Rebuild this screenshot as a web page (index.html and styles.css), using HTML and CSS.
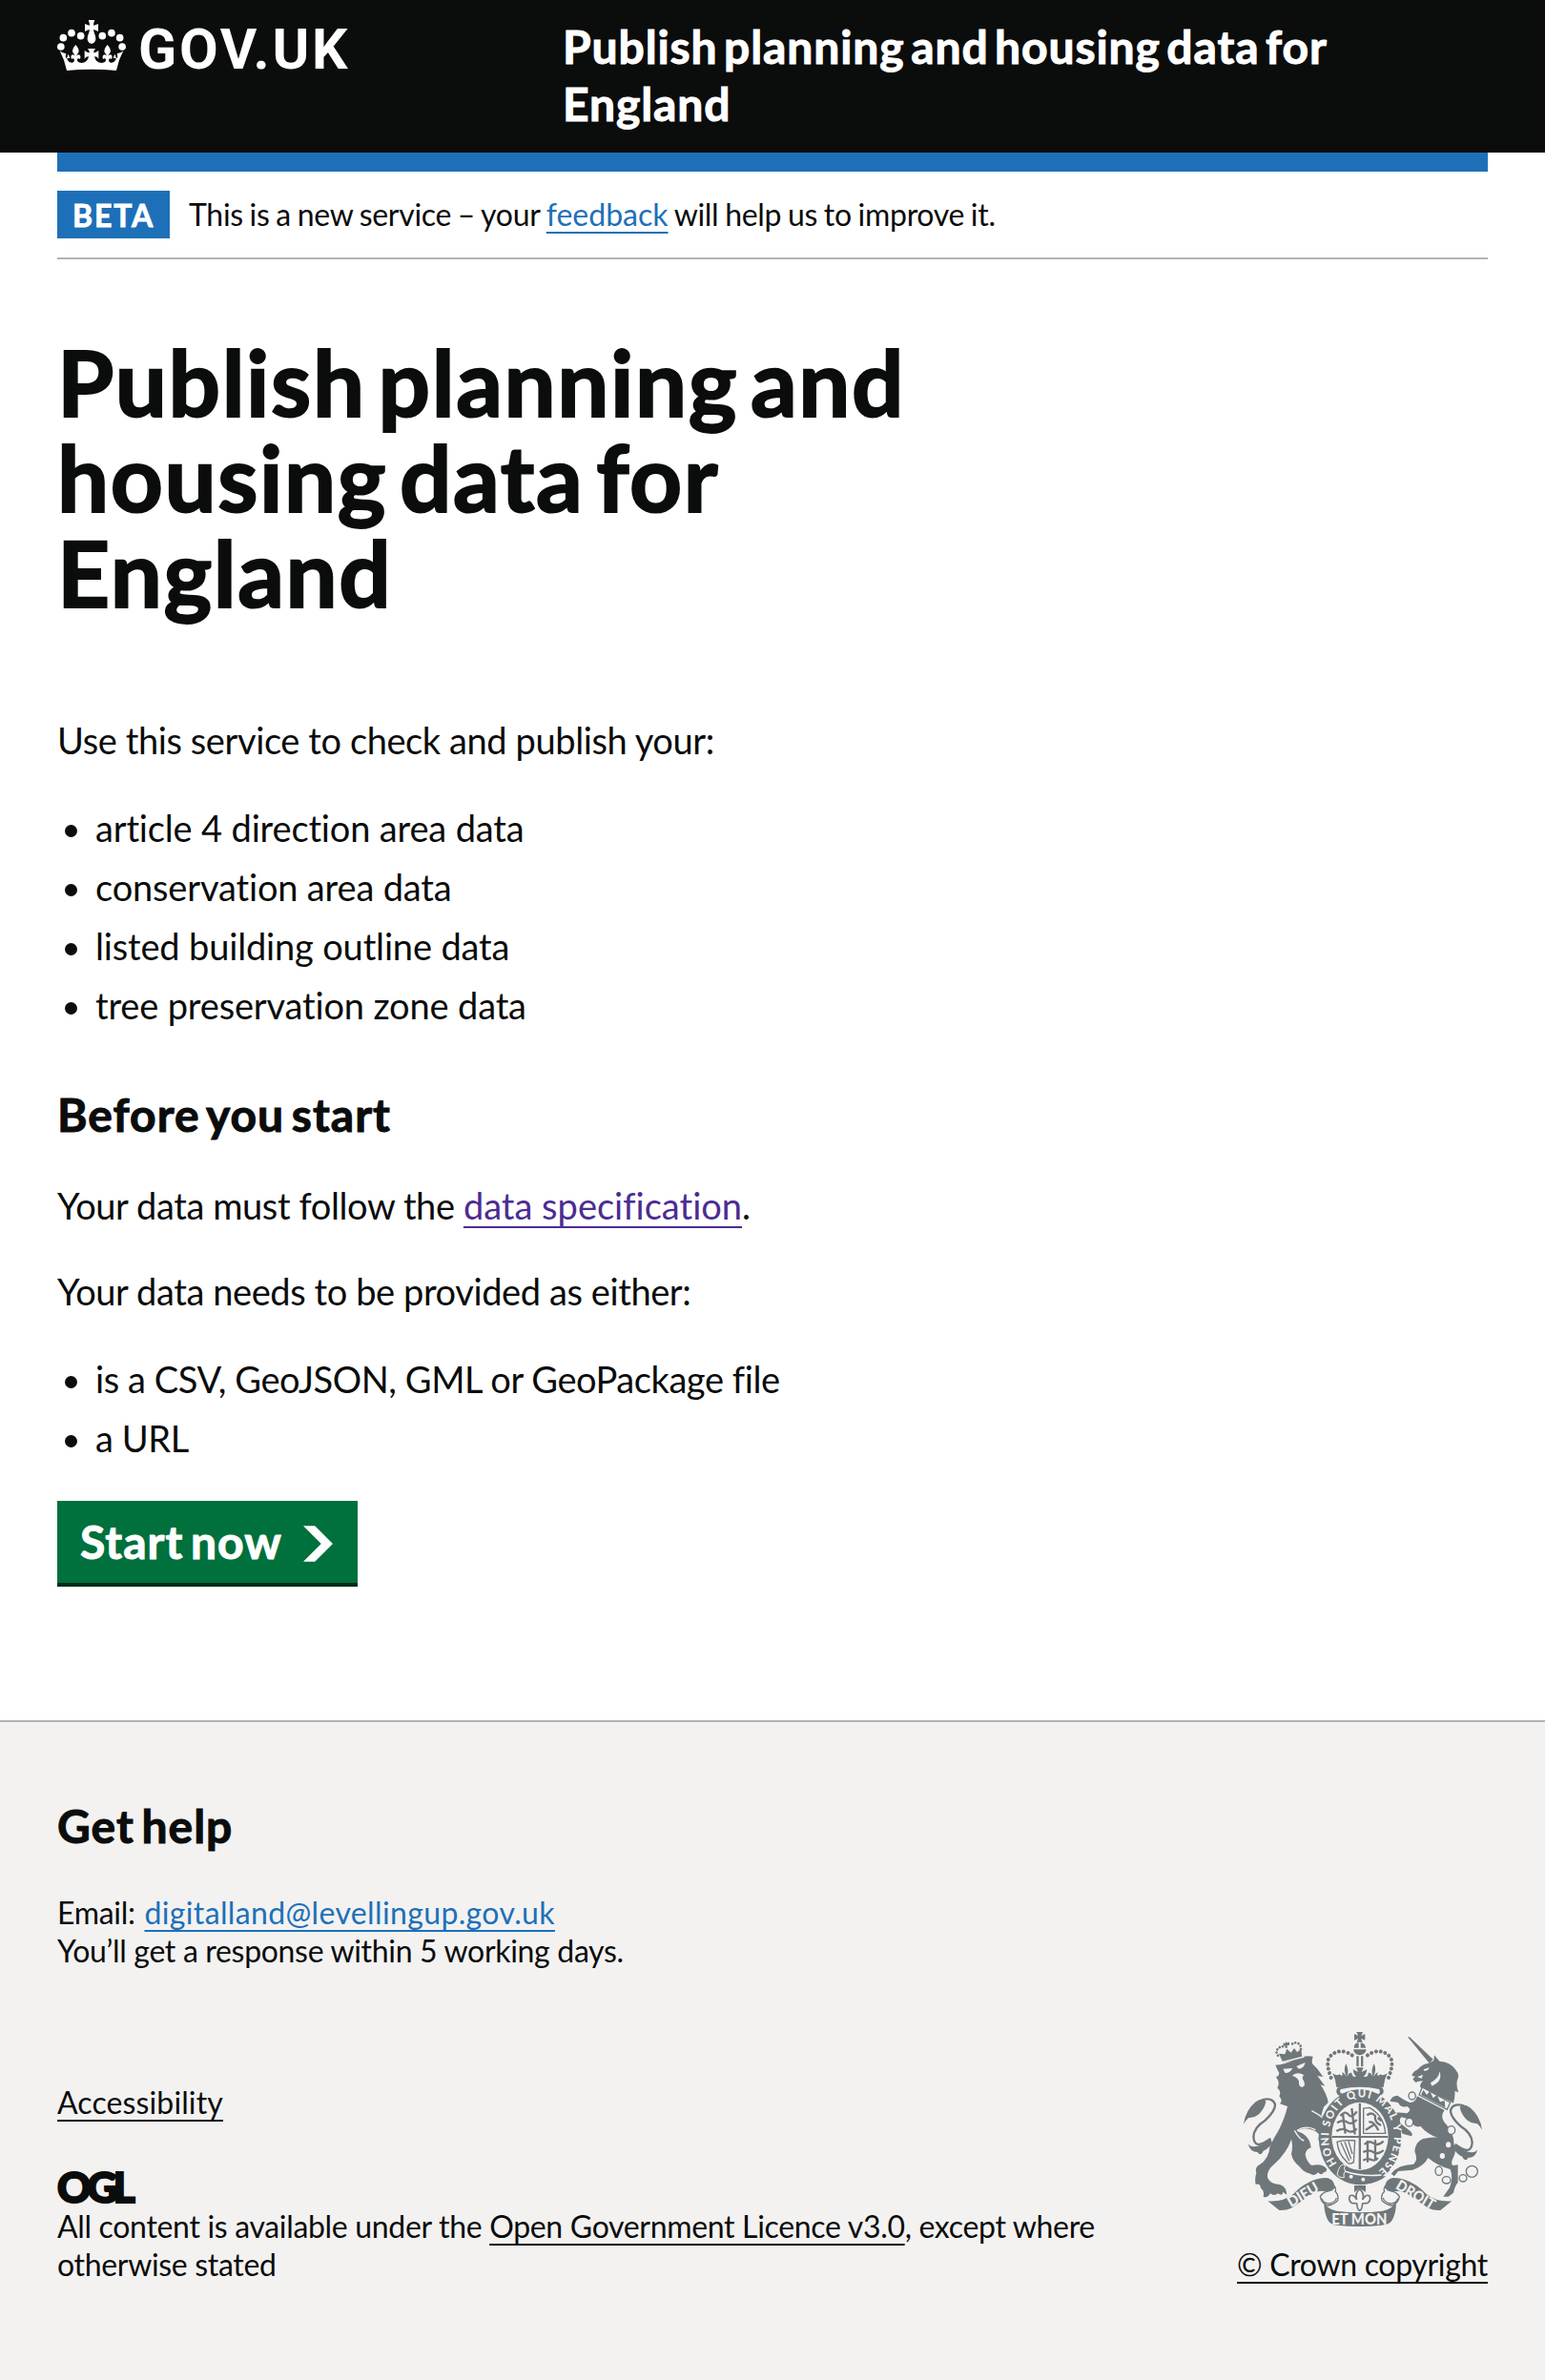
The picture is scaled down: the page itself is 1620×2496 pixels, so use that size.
FILE: index.html
```
<!DOCTYPE html>
<html lang="en">
<head>
<meta charset="utf-8">
<title>Publish planning and housing data for England</title>
<link rel="stylesheet" href="styles.css">
</head>
<body>
<header class="header">
  <div class="container header-row">
    <a class="logo" href="#" aria-label="GOV.UK">
      <svg class="crown" viewBox="12 15 216 160" fill="#fff" aria-hidden="true">
        <g id="pearls">
          <circle cx="23.500" cy="99" r="11.500"/><circle cx="31" cy="71" r="11.500"/><circle cx="57" cy="56" r="11.500"/><circle cx="86" cy="65" r="11.500"/>
        </g>
        <use href="#pearls" transform="matrix(-1 0 0 1 240 0)"/>
        <path d="M110 15H130Q126 24 126 32Q134 31 141 27V51Q134 46 126 45Q127 54 132 65Q137 86 120 90Q103 86 108 65Q113 54 114 45Q106 46 99 51V27Q106 31 114 32Q114 24 110 15Z"/>
        <path d="M20 112Q28 121 40 120Q36 130 40 136Q45 132 46 122Q50 127 52 136Q43 132 43 138Q48 150 60 149Q68 146 65 138Q62 133 57 138Q52 126 61 124Q66 124 68 129Q66 121 61 117Q57 107 70 93Q83 107 79 117Q74 121 72 129Q74 124 79 124Q88 126 84 138Q78 133 75 138Q73 149 88 150Q107 150 111 130Q103 129 98 137V111Q106 118 114 118Q113 111 108 105H132Q127 111 126 118Q134 118 142 111V137Q137 129 129 130Q133 150 152 150Q167 149 165 138Q162 133 156 138Q152 126 161 124Q166 124 168 129Q166 121 161 117Q157 107 170 93Q183 107 179 117Q174 121 172 129Q174 124 179 124Q188 126 183 138Q178 133 175 138Q172 146 180 149Q192 150 197 138Q197 132 188 136Q190 127 194 122Q195 132 200 136Q204 130 200 120Q212 121 220 112Q205 140 198 174Q120 167 42 174Q35 140 20 112Z"/>
      </svg>
      <span class="wordmark">GOV.UK</span>
    </a>
    <a class="service-name" href="#">Publish planning and housing data for England</a>
  </div>
</header>

<div class="container">
  <div class="phase-banner">
    <strong class="tag">BETA</strong>
    <span class="phase-text">This is a new service – your <a class="link feedback" href="#">feedback</a> will help us to improve it.</span>
  </div>

  <main class="main">
    <h1 class="title">Publish planning and housing data for England</h1>
    <p class="body">Use this service to check and publish your:</p>
    <ul class="list">
      <li>article 4 direction area data</li>
      <li>conservation area data</li>
      <li>listed building outline data</li>
      <li>tree preservation zone data</li>
    </ul>
    <h2 class="heading">Before you start</h2>
    <p class="body">Your data must follow the <a class="link link-visited" href="#">data specification</a>.</p>
    <p class="body">Your data needs to be provided as either:</p>
    <ul class="list list-formats">
      <li>is a CSV, GeoJSON, GML or GeoPackage file</li>
      <li>a URL</li>
    </ul>
    <a class="button" href="#">Start now
      <svg class="chevron" viewBox="0 0 33 40" aria-hidden="true"><path fill="#fff" d="M0 0h13l20 20-20 20H0l20-20z"/></svg>
    </a>
  </main>
</div>

<footer class="footer">
  <div class="container">
    <h2 class="heading">Get help</h2>
    <p class="contact">Email: <a class="link email" href="#">digitalland@levellingup.gov.uk</a><br>You’ll get a response within 5 working days.</p>
    <div class="meta">
      <div class="meta-main">
        <a class="link link-dark accessibility" href="#">Accessibility</a>
        <div class="ogl">OGL</div>
        <p class="licence">All content is available under the <a class="link link-dark" href="#">Open Government Licence v3.0</a>, except where otherwise stated</p>
      </div>
      <div class="meta-side">
        <svg class="crest" viewBox="72 66 750 612" aria-hidden="true">
          <defs>
            <path id="motto" d="M366 480A103 125 0 1 1 500 500"/>
            <g id="tail">
              <path d="M156 402Q106 440 103 396Q104 366 140 344Q172 314 171 294Q162 270 130 280" fill="none" stroke="#6f777b" stroke-width="7"/>
              <path d="M72 356Q78 312 110 286Q132 270 142 285Q138 308 118 326Q102 338 88 336Q78 344 72 356ZM86 418Q96 432 120 424Q144 416 156 398L162 416Q146 436 134 440Q130 452 120 450L116 444Q92 444 86 418Z"/>
            </g>
            <g id="scroll">
              <path d="M148 598Q196 602 228 576Q276 526 332 525Q358 530 357 552L342 572Q312 560 290 574Q252 600 222 620Q204 629 184 627Z"/>
              <path d="M357 550Q364 560 360 568Q372 578 368 596Q354 610 336 612Q316 604 313 584Q320 570 342 566Q356 562 357 550Z" fill="#f3f2f1" stroke="#6f777b" stroke-width="4"/>
              <path d="M318 590Q322 606 342 606Q362 600 364 588" fill="none" stroke="#6f777b" stroke-width="4"/>
            </g>
          </defs>
          <g fill="#6f777b">
            <!-- central crown -->
            <path d="M427 66H447L442 78L454 72V92L442 87L446 98H428L432 87L420 92V72L432 78Z"/>
            <path d="M419 116Q420 100 434 100V116ZM440 100Q455 102 456 116H440ZM417 121H458Q455 138 437 139Q420 138 417 121Z"/>
            <path d="M427 142H434V174H427ZM441 142H448V174H441Z"/>
            <path d="M347 210Q328 160 344 143Q366 120 396 130Q412 136 420 146M528 210Q547 160 531 143Q509 120 479 130Q463 136 455 146" fill="none" stroke="#6f777b" stroke-width="12" stroke-linecap="round" stroke-dasharray="0.1 14.500"/>
            <path d="M352 196Q366 206 374 199Q386 212 382 192Q392 198 396 206Q384 184 394 166Q404 184 398 206Q404 192 412 195Q414 210 426 206Q418 202 416 184L432 192L426 178H449L443 192L460 184Q458 202 449 206Q464 210 464 195Q472 192 478 206Q472 184 482 166Q492 184 480 206Q486 198 494 192Q490 212 502 199Q510 206 524 196Q514 216 512 240Q437 230 364 240Q362 216 352 196Z"/>
            <path d="M364 256Q362 240 378 237Q437 228 498 237Q514 240 512 256Q506 270 494 268Q437 238 384 266Q368 270 364 256Z"/>
            <path d="M378 246Q437 232 498 246Q504 256 496 262Q437 236 382 260Q370 256 378 246Z" fill="#f3f2f1"/>

            <!-- lion -->
            <path d="M183 134L196 163L256 149L253 118L241 130L231 117L221 131L208 119L202 136Z"/>
            <path d="M180 140Q172 128 178 121Q186 110 200 112M252 120Q254 108 244 102Q232 96 222 106" fill="none" stroke="#6f777b" stroke-width="8" stroke-linecap="round" stroke-dasharray="0.1 10"/>
            <path d="M206 94L210 116H202ZM196 102L216 98V107L198 110Z"/>
            <path d="M172 170Q200 170 238 150Q264 138 290 143Q286 156 288 166Q306 182 322 207L304 204L328 236L314 232Q334 262 338 288L324 302L316 328Q344 348 346 376L350 414Q334 410 338 424Q322 424 312 412Q302 402 312 394Q304 376 280 372Q258 366 240 378Q280 390 284 430Q268 434 266 452Q270 474 286 486Q322 478 334 498Q330 512 324 506Q318 520 306 508Q296 522 282 512Q262 510 248 490Q226 472 222 450Q228 424 222 404Q208 446 168 482Q142 504 148 526Q156 544 186 546Q206 552 208 578L196 570Q194 584 180 574Q168 584 156 574Q146 590 134 584Q138 566 126 558Q124 540 110 546Q106 526 112 510Q106 492 122 484Q152 464 154 428Q164 404 182 376Q202 336 210 300L186 292Q196 282 184 268Q192 252 178 242Q188 226 174 208Q190 200 180 188Z"/>
            <path d="M196 182L226 180Q216 198 202 194ZM238 174L266 162Q262 180 246 182ZM224 204Q240 188 262 202Q252 208 262 222Q268 236 256 240Q244 238 246 222Q242 208 224 204Z" fill="#f3f2f1"/>
            <path d="M286 314Q330 336 340 362M240 376Q268 358 298 374M232 376Q248 404 262 408M190 162L262 144" fill="none" stroke="#f3f2f1" stroke-width="4"/>
            <use href="#tail"/>

            <!-- unicorn -->
            <path d="M588 82L594 82L668 152L656 164Z"/>
            <path d="M654 164L670 156L672 139L688 158Q722 160 738 184Q752 200 746 212Q738 230 748 256L736 252Q738 268 732 290L722 284L630 242Q622 234 636 220L618 222Q614 230 604 214L612 206L601 204Q604 190 620 184Q634 166 654 164Z"/>
            <path d="M638 184L656 178Q652 190 640 188ZM660 226Q688 210 688 190Q700 222 664 236ZM618 208L636 200L632 212Z" fill="#f3f2f1"/>
            <path d="M634 240L722 288L712 310L624 264Z" fill="#f3f2f1" stroke="#6f777b" stroke-width="4"/>
            <path d="M630 264L638 248L648 264L658 252L668 274L680 264L690 286L704 282L706 304Z"/>
            <path d="M618 268L704 312Q686 334 712 360Q734 386 734 420Q742 440 732 460Q722 480 730 486L746 484V540Q736 550 732 572L716 584H700L720 556Q732 524 722 498Q680 486 652 462Q640 488 604 500L558 504L546 520L536 512Q556 484 606 482Q622 470 610 442Q612 412 636 402Q662 396 682 398Q650 388 628 362Q606 370 598 342L568 334Q560 342 566 354L596 378Q606 386 600 394L572 386Q558 360 544 350L530 326Q548 316 586 322Q604 310 586 300Q566 306 558 288L532 284Q538 266 556 266Q576 280 594 288Q612 290 618 268Z"/>
            <use href="#tail" transform="matrix(-1 0 0 1 894 18)"/>
            <g fill="#f3f2f1" stroke="#6f777b" stroke-width="4">
              <ellipse cx="602" cy="267" rx="11" ry="12"/><ellipse cx="593" cy="350" rx="12" ry="13"/>
              <ellipse cx="725" cy="375" rx="12" ry="13"/><ellipse cx="716" cy="421" rx="10" ry="11"/>
              <ellipse cx="697" cy="456" rx="10" ry="11"/><ellipse cx="686" cy="503" rx="11" ry="14"/>
              <ellipse cx="710" cy="532" rx="13" ry="11"/><ellipse cx="762" cy="526" rx="12" ry="11"/>
              <circle cx="790" cy="505" r="18"/>
            </g>

            <!-- garter and shield -->
            <ellipse cx="438" cy="397" rx="130" ry="150"/>
            <ellipse cx="438" cy="394" rx="89" ry="107" fill="#f3f2f1"/>
            <path d="M434 290H441V498H434ZM350 393H526V399H350Z"/>
            <g fill="none" stroke="#6f777b" stroke-width="7">
              <path d="M376 330Q392 312 402 326T428 316M366 352Q386 340 398 350T428 342M364 378Q384 366 398 376T428 370M412 306L422 388M384 324L392 386"/>
              <path d="M452 420Q466 406 480 416T512 410M448 444Q466 434 480 444T512 438M448 470Q462 462 474 468T494 462M462 408V476M486 406V470"/>
              <path d="M460 328Q474 316 486 330Q482 350 504 360M466 350Q480 344 496 376M456 374L482 358M494 336L506 346"/>
            </g>
            <g fill="none" stroke="#6f777b" stroke-width="4">
              <path d="M449 306V385H518Q514 330 468 304Z"/>
              <path d="M366 412Q386 404 422 408L418 476Q402 486 396 474Q370 450 366 412ZM378 414L404 472M390 412L410 466M402 410L414 450"/>
            </g>
            <path d="M366 494Q378 474 390 484L384 500L520 520Q500 538 460 544Q410 544 380 526Q362 520 366 494Z"/>
            <path d="M370 500Q380 476 392 486Q384 496 392 504Q384 512 388 524Q372 526 366 514Z" fill="#6f777b" stroke="#f3f2f1" stroke-width="3"/>
            <path d="M390 504Q440 522 506 516" fill="none" stroke="#f3f2f1" stroke-width="4"/>
            <g fill="#f3f2f1"><circle cx="410" cy="521" r="6"/><circle cx="448" cy="530" r="6"/></g>
            <text class="motto"><textPath href="#motto" textLength="570" lengthAdjust="spacing">HONI SOIT QUI MAL Y PENSE</textPath></text>

            <!-- fleur-de-lis and scrolls -->
            <path d="M420 549H456V570L437 558L420 570Z"/>
            <path d="M437 560Q454 576 446 594Q456 574 468 582Q474 596 462 604L446 606Q444 626 437 628Q430 626 428 606L412 604Q400 596 406 582Q418 574 428 594Q420 576 437 560Z" fill="#f3f2f1" stroke="#6f777b" stroke-width="5"/>
            <use href="#scroll"/>
            <use href="#scroll" transform="matrix(-1 0 0 1 875 0)"/>
            <path d="M325 600Q334 624 364 629Q437 638 510 629Q541 624 552 598Q552 640 538 660Q530 672 506 674Q437 682 366 674Q344 672 336 656Q324 630 325 600Z"/>
          </g>
          <g class="ribbon-text">
            <text x="258" y="594" transform="rotate(-31 258 577)" font-size="46" textLength="106" lengthAdjust="spacingAndGlyphs">DIEU</text>
            <text x="436" y="671" font-size="49" textLength="174" lengthAdjust="spacingAndGlyphs">ET MON</text>
            <text x="614" y="594" transform="rotate(31 614 577)" font-size="46" textLength="134" lengthAdjust="spacingAndGlyphs">DROIT</text>
          </g>
        </svg>
        <a class="link link-dark copyright" href="#">© Crown copyright</a>
      </div>
    </div>
  </div>
</footer>
</body>
</html>
```
FILE: styles.css
```
* { box-sizing: border-box; }
body {
  margin: 0;
  background: #fff;
  color: #0b0c0c;
  font-family: Lato, "Noto Sans", sans-serif;
  font-size: 38px;
  line-height: 50px;
}
h1, h2, p, ul { margin: 0; padding: 0; }
.container { width: 1500px; margin: 0 auto; }

.header { height: 160px; background: #0b0c0c; color: #fff; }
.header-row { display: grid; grid-template-columns: 530px 1fr; }
.logo {
  display: flex;
  align-items: flex-start;
  gap: 13px;
  padding-top: 21px;
  color: #fff;
  text-decoration: none;
}
.crown { width: 72px; height: 53.300px; }
.wordmark {
  margin-top: -4px;
  font-family: Roboto, sans-serif;
  font-size: 59px;
  font-weight: 700;
  line-height: 70px;
  letter-spacing: 2.700px;
}
.service-name {
  padding-top: 19px;
  color: #fff;
  font-size: 48px;
  font-weight: 700;
  line-height: 60px;
  letter-spacing: 0.900px;
  word-spacing: -6px;
  text-decoration: none;
  -webkit-text-stroke: 1px currentColor;
}

.phase-banner {
  display: flex;
  align-items: flex-start;
  gap: 20px;
  height: 112px;
  padding-top: 20px;
  border-top: 20px solid #1d70b8;
  border-bottom: 2px solid #b1b4b6;
  font-size: 32px;
  line-height: 40px;
}
.tag {
  width: 118px;
  height: 50px;
  background: #1d70b8;
  color: #fff;
  font-size: 32px;
  font-weight: 700;
  line-height: 51px;
  letter-spacing: 1.800px;
  text-align: center;
  text-indent: 0;
  -webkit-text-stroke: 0.800px currentColor;
}
.phase-text { padding-top: 5px; letter-spacing: -0.300px; word-spacing: -1.100px; }

.link {
  color: #1d70b8;
  text-decoration: underline;
  text-decoration-thickness: 2px;
  text-underline-offset: 6px;
}
.feedback { letter-spacing: 0; }
.link-visited { color: #4c2c92; text-underline-offset: 7px; letter-spacing: 0.010px; }
.link-dark { color: #0b0c0c; }

.main { width: 960px; padding-top: 78px; }
.title {
  margin-bottom: 101px;
  font-size: 96px;
  font-weight: 700;
  line-height: 100px;
  letter-spacing: 1.600px;
  word-spacing: -12px;
  -webkit-text-stroke: 2px currentColor;
}
.body { margin-bottom: 40px; letter-spacing: -0.400px; }
.list { padding-left: 40px; list-style: none; letter-spacing: -0.160px; }
.list-formats { letter-spacing: -0.430px; }
.list li { position: relative; margin-bottom: 10px; padding-top: 2px; }
.list li:last-child { margin-bottom: 0; }
.list li::before {
  content: "";
  position: absolute;
  left: -32px;
  top: 24px;
  width: 13px;
  height: 13px;
  border-radius: 50%;
  background: #0b0c0c;
}
.heading {
  margin-bottom: 40px;
  font-size: 48px;
  font-weight: 700;
  line-height: 60px;
  letter-spacing: 1px;
  word-spacing: -5px;
  -webkit-text-stroke: 1px currentColor;
}
.list + .heading { margin-top: 60px; }
.button {
  display: flex;
  justify-content: space-between;
  width: 315px;
  height: 86px;
  margin-top: 41px;
  padding: 13px 26px 13px 24px;
  background: #00703c;
  box-shadow: 0 4px 0 #002d18;
  color: #fff;
  font-size: 48px;
  font-weight: 700;
  line-height: 60px;
  letter-spacing: 1px;
  word-spacing: -5px;
  text-decoration: none;
  white-space: nowrap;
  -webkit-text-stroke: 1px currentColor;
}
.chevron { width: 31px; height: 38px; margin-top: 13px; }

.footer {
  height: 692px;
  margin-top: 144px;
  padding-top: 79px;
  border-top: 2px solid #b1b4b6;
  background: #f3f2f1;
  font-size: 32px;
  line-height: 40px;
  letter-spacing: -0.320px;
}
.contact { padding-top: 1px; }
.email { margin-left: 2px; letter-spacing: 0.360px; }
.meta { display: flex; justify-content: space-between; margin-top: 65px; }
.meta-main { width: 1150px; padding-top: 54px; }
.accessibility { display: block; width: max-content; margin-bottom: 47px; letter-spacing: 0.120px; }
.ogl {
  height: 43px;
  font-size: 44px;
  font-weight: 900;
  line-height: 42px;
  letter-spacing: -4.400px;
  -webkit-text-stroke: 2.200px currentColor;
}
.meta-side { display: flex; flex-direction: column; align-items: flex-end; }
.crest { width: 250px; height: 204px; margin-right: 6px; }
.copyright { margin-top: 20px; white-space: nowrap; }
.motto { font: 900 34px Lato, sans-serif; letter-spacing: 0; fill: #f3f2f1; }
.ribbon-text {
  font-family: Lato, sans-serif;
  font-weight: 900;
  letter-spacing: 0;
  fill: #f3f2f1;
  text-anchor: middle;
}
```
